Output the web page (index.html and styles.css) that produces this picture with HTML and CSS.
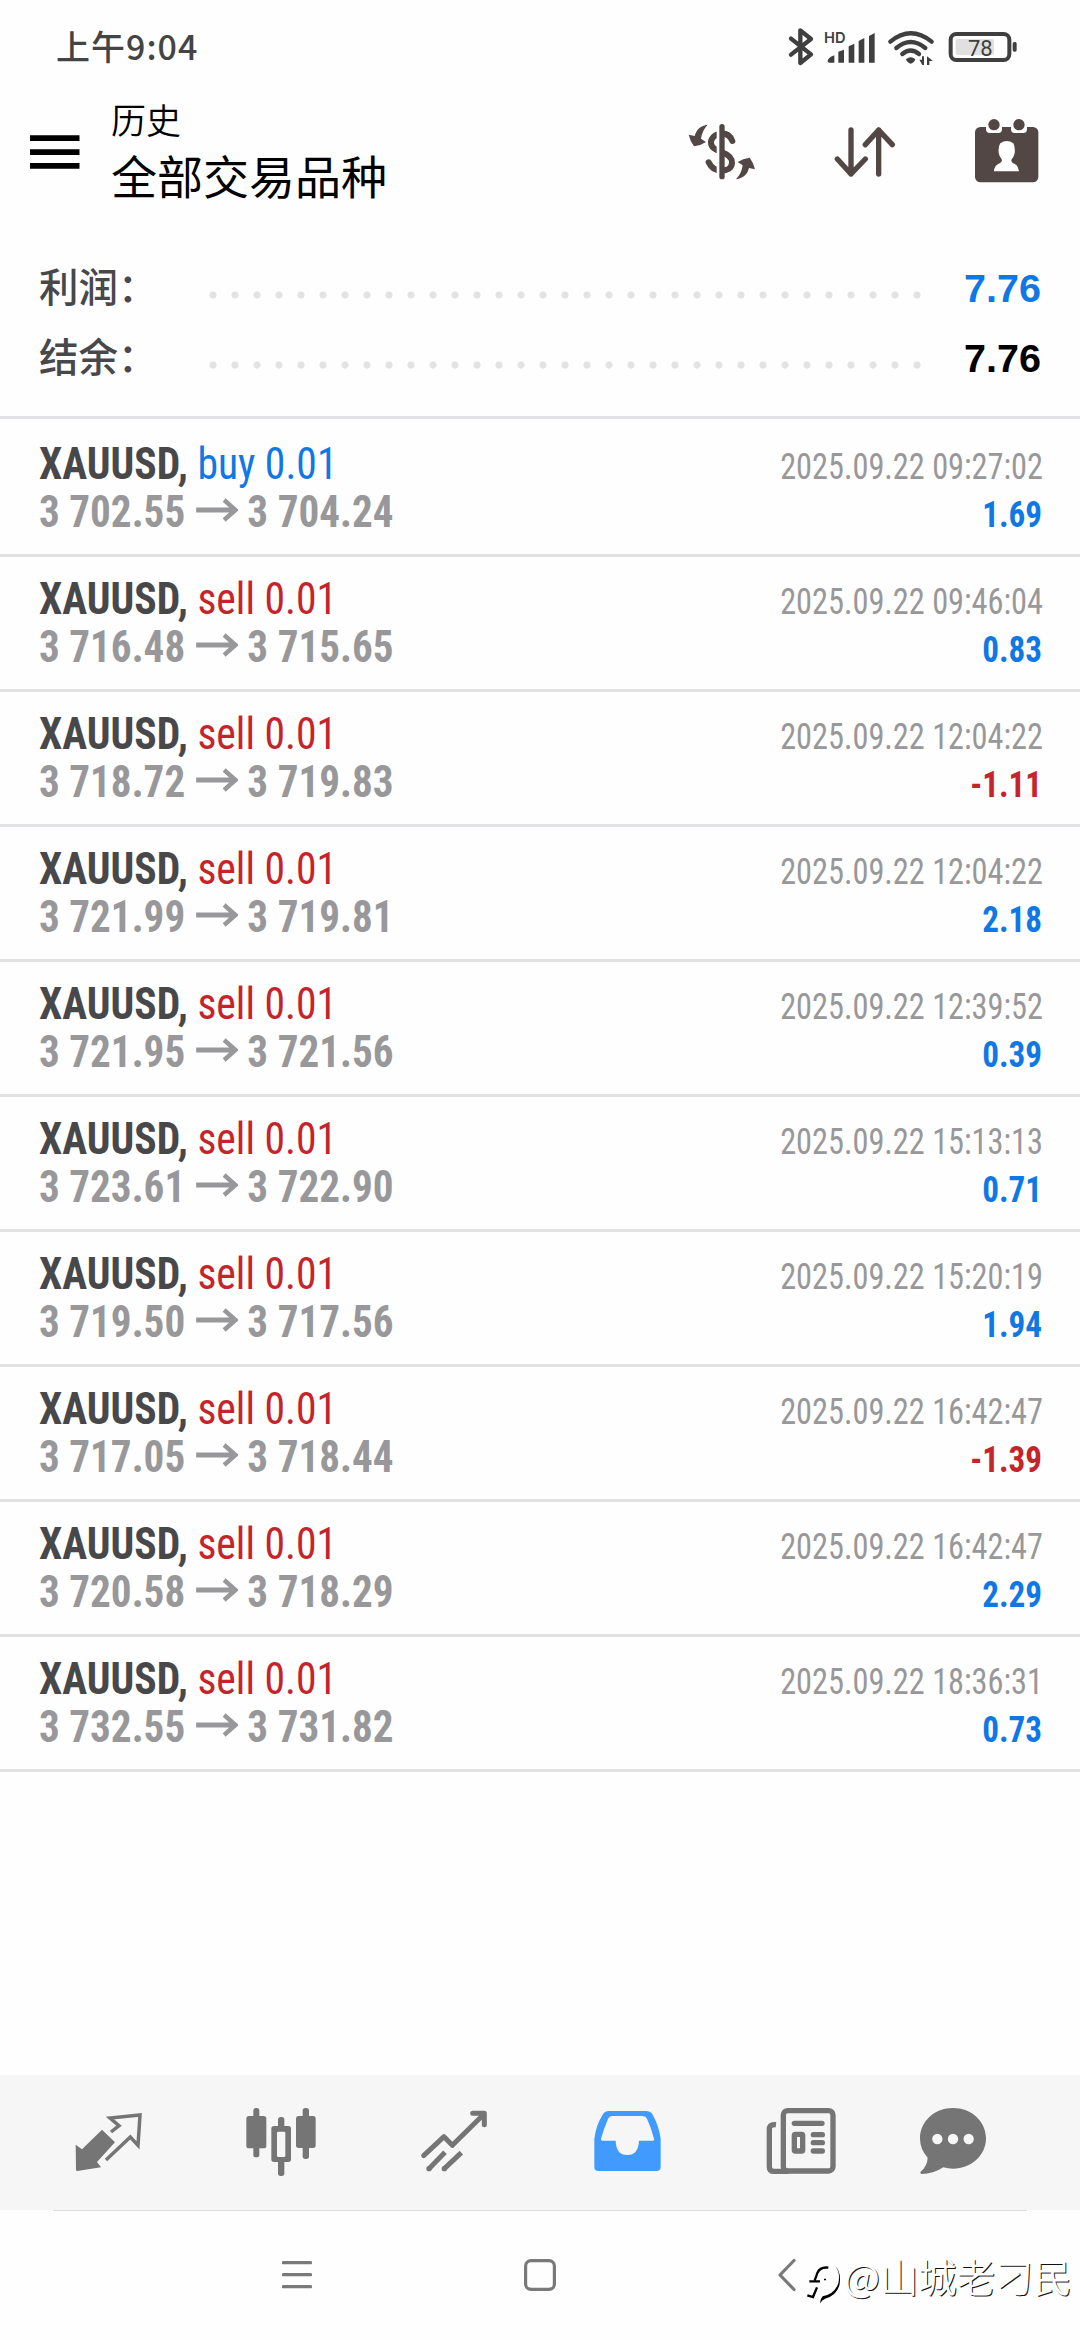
FILE: index.html
```html
<!DOCTYPE html>
<html lang="zh-CN">
<head>
<meta charset="utf-8">
<title>历史</title>
<link rel="stylesheet" href="styles.css">
</head>
<body>
<div class="screen">
  <div class="status">
    <span class="clock">上午9:04</span>
    <svg class="status-icons" viewBox="0 0 750 180" width="250" height="60">
      <g fill="none" stroke="#3f3f3f" stroke-width="13" stroke-linecap="round" stroke-linejoin="round">
        <path d="M33 56 L93 103 L61 129 V31 L93 57 L33 104"/>
      </g>
      <g fill="#3f3f3f">
        <text x="132" y="68" class="hd">HD</text>
        <path d="M143 123 Q143 114 163 106 V128 H148 Q143 128 143 123Z"/>
        <path d="M175 95 L192 89 V128 H175Z"/>
        <path d="M206 79 L223 71 V128 H206Z"/>
        <path d="M236 63 L253 54 V128 H236Z"/>
        <path d="M267 48 L284 39 V128 H267Z"/>
        <path d="M378 118 Q392 105 406 118 Q403 128 392 131 Q381 128 378 118Z"/>
        <path d="M418 119 h8 v-10 h6 v26 h-5z M441 109 l18 14 h-11 v12 h-7z"/>
        <rect x="698" y="66" width="12" height="29" rx="5"/>
      </g>
      <g fill="none" stroke="#3f3f3f" stroke-width="13" stroke-linecap="round">
        <path d="M331 65 Q392 15 455 65"/>
        <path d="M349 84 Q392 48 436 84"/>
        <path d="M367 102 Q392 81 417 102"/>
      </g>
      <rect x="527" y="57" width="115" height="48" rx="6" fill="#e0e0e0"/>
      <rect x="512" y="42" width="176" height="78" rx="17" fill="none" stroke="#3f3f3f" stroke-width="12"/>
      <text x="564" y="107" class="battery">78</text>
    </svg>
  </div>

  <header class="header">
    <svg class="menu" viewBox="0 0 50 40" width="50" height="40">
      <path d="M0 5.3h49.5v5.7H0z M0 19.3h49.5V25H0z M0 33.1h49.5v5.6H0z"/>
    </svg>
    <div class="titles">
      <div class="title-small">历史</div>
      <div class="title-large">全部交易品种</div>
    </div>
    <svg class="act-currency" viewBox="24 30 204 180" width="68" height="60">
      <path d="M157 93 C151 77 137 70 122 71 C104 73 92 86 93 99 C94 114 108 119 125 126 C146 134 157 143 156 159 C155 174 141 182 125 182 C107 182 94 175 86 157" fill="none" stroke="#534746" stroke-width="18" stroke-linecap="round"/>
      <path d="M110 36h10v176h-10z" fill="#fff"/>
      <rect x="118" y="42" width="16" height="166" rx="8" fill="#534746"/>
      <path id="swap" d="M83 44 C62 47 49 58 44 78 L26 74 Q31 95 42 109 Q62 107 78 96 L63 86 Q66 62 83 44Z" fill="#534746"/>
      <use href="#swap" transform="rotate(180 125.5 126)"/>
    </svg>
    <svg class="act-sort" viewBox="582 360 189 180" width="63" height="60">
      <path d="M633 390V522 M592 477 L633 522 L676 477 M716 522V390 M676 434 L716 390 L757 434" fill="none" stroke="#534746" stroke-width="16" stroke-linecap="round" stroke-linejoin="round"/>
    </svg>
    <svg class="act-date" viewBox="1002 348 198 204" width="66" height="68">
      <rect x="1005" y="381" width="190" height="166" rx="16" fill="#534746"/>
      <path d="M1038 378h48v10q0 11-11 11h-26q-11 0-11-11z M1113 378h48v10q0 11-11 11h-26q-11 0-11-11z" fill="#fff"/>
      <circle cx="1062" cy="374" r="17" fill="#534746"/>
      <circle cx="1137" cy="374" r="17" fill="#534746"/>
      <path d="M1081 430 Q1100 416 1120 430 Q1126 440 1124 460 Q1121 472 1115 478 Q1112 486 1120 490 Q1136 496 1137 514 H1062 Q1063 496 1079 490 Q1088 486 1085 478 Q1078 470 1076 458 Q1074 440 1081 430Z" fill="#fff"/>
    </svg>
  </header>

  <section class="summary">
    <div class="sum-row"><span class="sum-label">利润：</span><span class="leader"></span><span class="sum-value profit">7.76</span></div>
    <div class="sum-row"><span class="sum-label">结余：</span><span class="leader"></span><span class="sum-value">7.76</span></div>
  </section>

  <main class="deals" id="deals"></main>

  <nav class="tabs">
    <svg viewBox="216 141 216 216" width="72" height="72">
      <path d="M306 209 L345 247 L291 306 L303 322 L232 333 Q228 333 228 329 L227 254 L246 268Z" fill="#757575"/>
      <path d="M333 216 L357 197 L330 174 L420 165 L414 256 L391 231 L318 300" fill="none" stroke="#757575" stroke-width="10.5"/>
    </svg>
    <svg viewBox="735 141 216 216" width="72" height="72">
      <g fill="#757575">
        <rect x="760" y="144" width="18" height="148" rx="8"/><rect x="739" y="168" width="60" height="97" rx="8"/>
        <rect x="834" y="171" width="19" height="177" rx="8"/><rect x="814" y="198" width="59" height="108" rx="8"/>
        <rect x="908" y="144" width="19" height="153" rx="8"/><rect x="888" y="168" width="59" height="96" rx="8"/>
      </g>
      <rect x="831" y="215" width="25" height="76" rx="4" fill="#f6f6f6"/>
    </svg>
    <svg viewBox="174 141 216 216" width="72" height="72">
      <path d="M191 287 L252 230 L277 256 L370 164 M338 160 H373 V194" fill="none" stroke="#757575" stroke-width="15" stroke-linecap="round" stroke-linejoin="round"/>
      <path d="M207 326 L255 277 M253 326 L304 278" fill="none" stroke="#757575" stroke-width="15"/>
      <circle cx="207" cy="326" r="8" fill="#757575"/><circle cx="253" cy="326" r="8" fill="#757575"/>
    </svg>
    <svg viewBox="693 141 216 216" width="72" height="72">
      <path fill-rule="evenodd" d="M746 153 H858 Q872 153 878 164 Q897 198 902 236 V320 Q902 333 889 333 H716 Q703 333 703 320 V236 Q708 195 728 164 Q734 153 746 153Z M757 168 Q748 168 744 177 Q731 207 723 236 Q722 242 728 242 H767 Q768 285 802 285 Q835 285 837 242 H877 Q884 242 882 236 Q874 204 861 176 Q857 168 848 168Z" fill="#419bff"/>
    </svg>
    <svg viewBox="132 141 216 216" width="72" height="72">
      <g fill="none" stroke="#757575">
        <rect x="190" y="152" width="149" height="181" rx="13" stroke-width="16"/>
        <path d="M168 194 Q148 192 148 208 V320 Q148 334 162 334 H205" stroke-width="16"/>
        <path d="M223 190 H306 M280 224 H307 M280 248 H307 M280 273 H307" stroke-width="16" stroke-linecap="round"/>
        <rect x="223" y="223" width="25" height="50" stroke-width="16" rx="3"/>
      </g>
    </svg>
    <svg viewBox="591 141 216 216" width="72" height="72">
      <path d="M699 144 C754 144 798 184 798 235 C798 286 754 326 699 326 Q684 326 670 322 Q640 342 605 342 Q599 341 602 335 Q622 318 623 293 Q600 268 600 235 C600 184 644 144 699 144Z" fill="#757575"/>
      <g fill="#f6f6f6"><circle cx="652" cy="237" r="15.5"/><circle cx="699" cy="237" r="15.5"/><circle cx="746" cy="237" r="15.5"/></g>
    </svg>
  </nav>

  <footer class="sysnav">
    <svg viewBox="0 0 30 32" width="30" height="32"><path d="M1.5 3.7H28.5 M1.5 15.7H28.5 M1.5 27.7H28.5" stroke="#797979" stroke-width="3.2" stroke-linecap="round"/></svg>
    <svg viewBox="0 0 32 32" width="32" height="32"><rect x="1.6" y="1.6" width="28.8" height="28.8" rx="5.5" fill="none" stroke="#797979" stroke-width="3.2"/></svg>
    <svg viewBox="0 0 18 34" width="18" height="34"><path d="M16 2.5 L2 17 L16 31.5" fill="none" stroke="#797979" stroke-width="3.2" stroke-linecap="round" stroke-linejoin="round"/></svg>
  </footer>

  <div class="credit">
    <svg viewBox="108 66 105 129" width="35" height="43">
      <path d="M175 83 Q150 80 142 99 Q138 112 134 121 M118 124 H150 M141 142 L129 171 L112 166" fill="none" stroke="#000" stroke-width="7"/>
      <path d="M195 77 Q212 96 205 130 Q194 162 158 169 Q149 180 150 190 Q156 180 165 176 Q202 166 209 132 Q214 94 195 77Z" fill="#000"/>
      <path d="M162 116h6v5h-6z"/>
    </svg>
    <span class="credit-name">@山城老刁民</span>
  </div>
</div>
<script src="deals.js"></script>
</body>
</html>
```
FILE: deals.js
```js
const deals = [
  ['buy', '3 702.55', '3 704.24', '09:27:02', '1.69'],
  ['sell', '3 716.48', '3 715.65', '09:46:04', '0.83'],
  ['sell', '3 718.72', '3 719.83', '12:04:22', '-1.11'],
  ['sell', '3 721.99', '3 719.81', '12:04:22', '2.18'],
  ['sell', '3 721.95', '3 721.56', '12:39:52', '0.39'],
  ['sell', '3 723.61', '3 722.90', '15:13:13', '0.71'],
  ['sell', '3 719.50', '3 717.56', '15:20:19', '1.94'],
  ['sell', '3 717.05', '3 718.44', '16:42:47', '-1.39'],
  ['sell', '3 720.58', '3 718.29', '16:42:47', '2.29'],
  ['sell', '3 732.55', '3 731.82', '18:36:31', '0.73'],
];

const arrow = '<svg class="arrow" viewBox="0 0 45 24" width="45" height="24">' +
  '<path d="M0 12H42 M30 2 L42 12 L30 22" fill="none" stroke="#98989a" stroke-width="4.8"/></svg>';

document.getElementById('deals').innerHTML = deals.map(([side, open, close, time, result]) => `
  <article class="deal">
    <div class="line">
      <div class="deal-title"><b>XAUUSD,</b> <span class="${side}">${side} 0.01</span></div>
      <time class="deal-time">2025.09.22 ${time}</time>
    </div>
    <div class="line">
      <div class="deal-prices">${open}${arrow}${close}</div>
      <div class="deal-result ${result.startsWith('-') ? 'loss' : 'profit'}">${result}</div>
    </div>
  </article>`).join('');
```
FILE: styles.css
```css
* { box-sizing: border-box; }

body {
  margin: 0;
  background: #fff;
  font-family: "Roboto Condensed", Roboto, "Noto Sans CJK SC", sans-serif;
}

svg { display: block; flex: none; }

.screen {
  position: relative;
  display: flex;
  flex-direction: column;
  width: 1080px;
  height: 2340px;
  overflow: hidden;
  background: #fefefe;
}

/* status bar */
.status {
  display: flex;
  justify-content: space-between;
  height: 90px;
  padding: 20px 50px 0 56px;
}
.clock {
  font: 500 34px/52px "Noto Sans CJK SC", sans-serif;
  letter-spacing: 1px;
  color: #444;
}
.hd { font: 600 44px Inter, sans-serif; fill: #3f3f3f; }
.battery { font: 400 66px Roboto, sans-serif; fill: #3f3f3f; }

/* title bar */
.header {
  display: flex;
  align-items: center;
  height: 120px;
  padding: 0 40px 0 30px;
}
.titles {
  flex: 1;
  margin-left: 31px;
  font-family: "Noto Sans CJK SC", sans-serif;
  color: #000;
}
.title-small { font-size: 35px; line-height: 48px; font-weight: 350; }
.title-large { font-size: 46px; line-height: 62px; }
.act-sort { margin-left: 78px; }
.act-date { margin-left: 77px; }

/* totals */
.summary {
  height: 209px;
  padding: 40px 39px 0;
  border-bottom: 3px solid #e2e2e4;
}
.sum-row {
  display: flex;
  align-items: baseline;
  height: 70px;
}
.sum-label {
  width: 163px;
  font: 500 39.5px/70px "Noto Sans CJK SC", sans-serif;
  color: #48484b;
}
.leader {
  align-self: flex-start;
  width: 726px;
  height: 22px;
  margin-top: 34px;
  background: radial-gradient(circle, #e3e3e3 3.2px, transparent 4px) 0 0 / 22px 22px repeat-x;
}
.sum-value {
  margin-left: auto;
  font: 700 39.5px/70px "Liberation Sans", Arial, sans-serif;
  color: #000;
}

/* history list */
.deals { margin-top: 3px; }
.deal {
  height: 135px;
  padding: 18px 37.5px 0 39px;
  border-bottom: 3px solid #e2e2e4;
}
.line {
  display: flex;
  justify-content: space-between;
  align-items: baseline;
  height: 48px;
  line-height: 48px;
  white-space: nowrap;
}
.deal-title {
  font-size: 44px;
  color: #48484b;
  transform: scaleX(0.945);
  transform-origin: left;
}
.deal-title b { font-weight: 700; }
.deal-prices {
  display: flex;
  align-items: baseline;
  font-size: 44px;
  font-weight: 700;
  color: #98989a;
  transform: scaleX(0.935);
  transform-origin: left;
}
.arrow { align-self: center; margin: 0 10px 4px 11.5px; }
.deal-time {
  font-size: 36px;
  color: #98989a;
  transform: scaleX(0.897);
  transform-origin: right;
}
.deal-result {
  font-size: 36px;
  font-weight: 700;
  transform: scaleX(0.92);
  transform-origin: right;
}
.buy, .sum-value.profit, .deal-result.profit { color: #0f78e4; }
.sell, .loss { color: #c4242a; }

/* bottom tabs */
.tabs {
  position: relative;
  display: flex;
  gap: 101px;
  height: 135px;
  margin-top: auto;
  padding: 32px 0 0 72px;
  background: #f6f6f6;
}
.tabs svg:last-child { margin-left: -20px; }

/* system navigation */
.sysnav {
  display: flex;
  align-items: center;
  height: 130px;
  padding-left: 282px;
  background: linear-gradient(#dcdcdc, #dcdcdc) 53px 0 / 974px 1px no-repeat;
}
.sysnav svg:nth-child(2) { margin-left: 212px; }
.sysnav svg:nth-child(3) { margin-left: 222px; }

.credit {
  position: absolute;
  left: 806px;
  top: 2262px;
  display: flex;
}
.credit-name {
  margin: -6px 0 0 3px;
  font: 350 38.4px/38px "Noto Sans CJK SC", sans-serif;
  color: #fff;
  text-shadow: 1px 1px 0 #111;
  white-space: nowrap;
}
```
